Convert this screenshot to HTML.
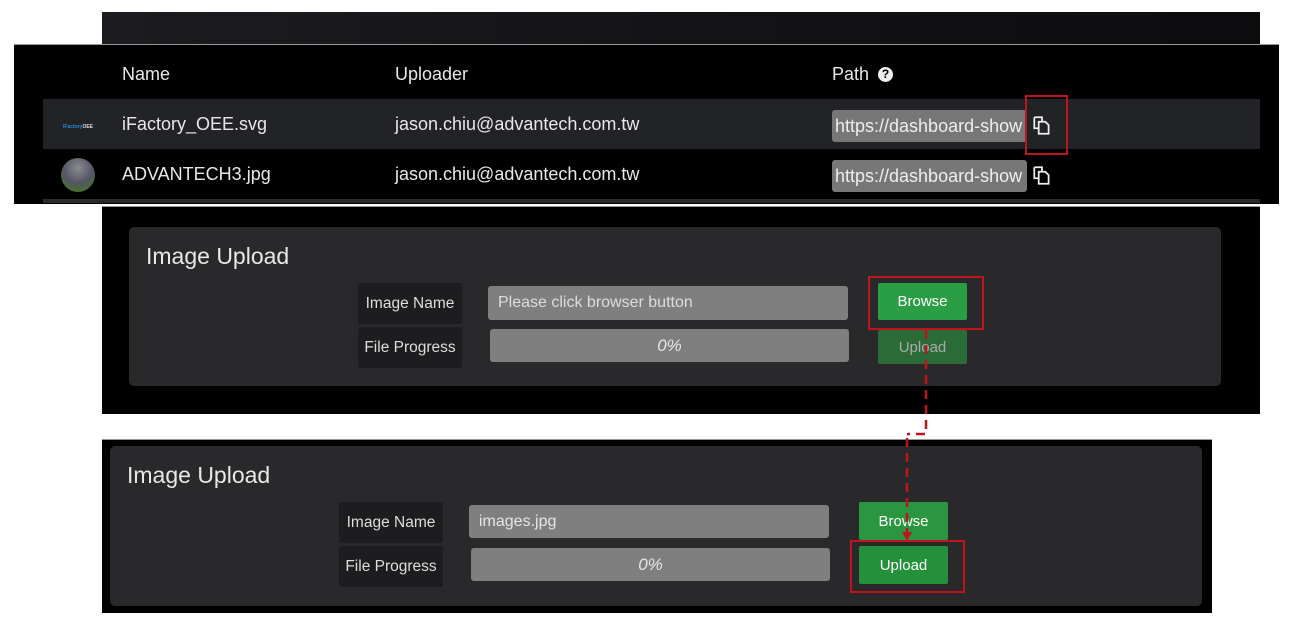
<!DOCTYPE html>
<html><head><meta charset="utf-8"><style>
*{margin:0;padding:0;box-sizing:border-box}
body{width:1289px;height:620px;background:#fff;position:relative;overflow:hidden;font-family:"Liberation Sans",sans-serif;color:#e8e8e8}
.a{position:absolute}
.t{position:absolute;white-space:nowrap;font-size:18px;line-height:20px}
.lbl{position:absolute;background:#1d1d20;font-size:15.5px;color:#ddd;display:flex;align-items:center;justify-content:center;border-radius:2px}
.inp{position:absolute;background:#7f7f7f;border-radius:3px;font-size:16px;color:#e6e6e6;display:flex;align-items:center}
.btn{position:absolute;border-radius:2px;font-size:15px;color:#fff;display:flex;align-items:center;justify-content:center}
.red{position:absolute;border:2px solid #c0141c}
.path{position:absolute;background:#777;border-radius:3px;font-size:18px;color:#eee;overflow:hidden;white-space:nowrap;padding-left:3px;line-height:32px}
</style></head><body>
<div class="a" style="left:102px;top:12px;width:1158px;height:32px;background:linear-gradient(90deg,#1c1c20,#0c0c0e)"></div>
<div class="a" style="left:14px;top:44px;width:1265px;height:160px;background:#000;border-top:1px solid #999"></div>
<div class="a" style="left:43px;top:99px;width:1217px;height:50px;background:#222326"></div>
<div class="a" style="left:43px;top:199px;width:1217px;height:4px;background:#2a2a2c"></div>
<div class="t" style="left:122px;top:64px">Name</div>
<div class="t" style="left:395px;top:64px">Uploader</div>
<div class="t" style="left:832px;top:64px">Path</div>
<div class="a" style="left:878px;top:67px;width:15px;height:15px;border-radius:50%;background:#eee;color:#000;font-size:12px;font-weight:bold;text-align:center;line-height:15px">?</div>
<div class="a" style="left:63px;top:124px;font-size:5px;color:#2a8ad8;font-weight:bold">iFactory<span style="color:#ddd">OEE</span></div>
<div class="a" style="left:61px;top:158px;width:34px;height:34px;border-radius:50%;background:radial-gradient(circle at 50% 30%,#8a8c8e,#556 50%,#4a6b3a 75%)"></div>
<div class="t" style="left:122px;top:114px">iFactory_OEE.svg</div>
<div class="t" style="left:395px;top:114px">jason.chiu@advantech.com.tw</div>
<div class="t" style="left:122px;top:164px">ADVANTECH3.jpg</div>
<div class="t" style="left:395px;top:164px">jason.chiu@advantech.com.tw</div>
<div class="path" style="left:832px;top:110px;width:195px;height:32px">https://dashboard-show</div>
<div class="path" style="left:832px;top:160px;width:195px;height:32px">https://dashboard-show</div>
<svg class="a" style="left:1031px;top:114px" width="22" height="22" viewBox="0 0 20 20" fill="none" stroke="#eee" stroke-width="1.6"><path d="M3 3h7v4M3 3v10h4"/><path d="M7 7h6l3 3v8H7z"/></svg>
<svg class="a" style="left:1031px;top:164px" width="22" height="22" viewBox="0 0 20 20" fill="none" stroke="#eee" stroke-width="1.6"><path d="M3 3h7v4M3 3v10h4"/><path d="M7 7h6l3 3v8H7z"/></svg>
<div class="red" style="left:1025px;top:95px;width:43px;height:60px"></div>

<div class="a" style="left:102px;top:206px;width:1158px;height:208px;background:#000;border-top:1px solid #999"></div>
<div class="a" style="left:129px;top:227px;width:1092px;height:159px;background:#29292c;border-radius:5px"></div>
<div class="t" style="left:146px;top:243px;font-size:23px;line-height:26px">Image Upload</div>
<div class="lbl" style="left:358px;top:283px;width:104px;height:41px">Image Name</div>
<div class="lbl" style="left:358px;top:327px;width:104px;height:41px">File Progress</div>
<div class="inp" style="left:488px;top:286px;width:360px;height:34px;padding-left:10px;color:#ddd">Please click browser button</div>
<div class="inp" style="left:490px;top:329px;width:359px;height:33px;justify-content:center;font-style:italic;font-size:17px">0%</div>
<div class="btn" style="left:878px;top:283px;width:89px;height:37px;background:#2a9d45">Browse</div>
<div class="btn" style="left:878px;top:330px;width:89px;height:34px;background:#2b6b37;color:#aaa">Upload</div>
<div class="red" style="left:868px;top:276px;width:116px;height:54px"></div>

<div class="a" style="left:102px;top:439px;width:1110px;height:174px;background:#000;border-top:1px solid #999"></div>
<div class="a" style="left:110px;top:446px;width:1092px;height:160px;background:#29292c;border-radius:5px"></div>
<div class="t" style="left:127px;top:462px;font-size:23px;line-height:26px">Image Upload</div>
<div class="lbl" style="left:339px;top:502px;width:104px;height:41px">Image Name</div>
<div class="lbl" style="left:339px;top:546px;width:104px;height:41px">File Progress</div>
<div class="inp" style="left:469px;top:505px;width:360px;height:33px;padding-left:10px">images.jpg</div>
<div class="inp" style="left:471px;top:548px;width:359px;height:33px;justify-content:center;font-style:italic;font-size:17px">0%</div>
<div class="btn" style="left:859px;top:502px;width:89px;height:38px;background:#2a9640">Browse</div>
<div class="btn" style="left:859px;top:546px;width:89px;height:38px;background:#25903a">Upload</div>
<div class="red" style="left:850px;top:540px;width:115px;height:53px"></div>

<svg class="a" style="left:0;top:0" width="1289" height="620"><g stroke="#c0141c" stroke-width="2.5" fill="none" stroke-dasharray="9,6"><path d="M926 330V434H907"/><path d="M907 438V535"/></g><path d="M902 532L907 541L912 532Z" fill="#c0141c"/></svg>
</body></html>
